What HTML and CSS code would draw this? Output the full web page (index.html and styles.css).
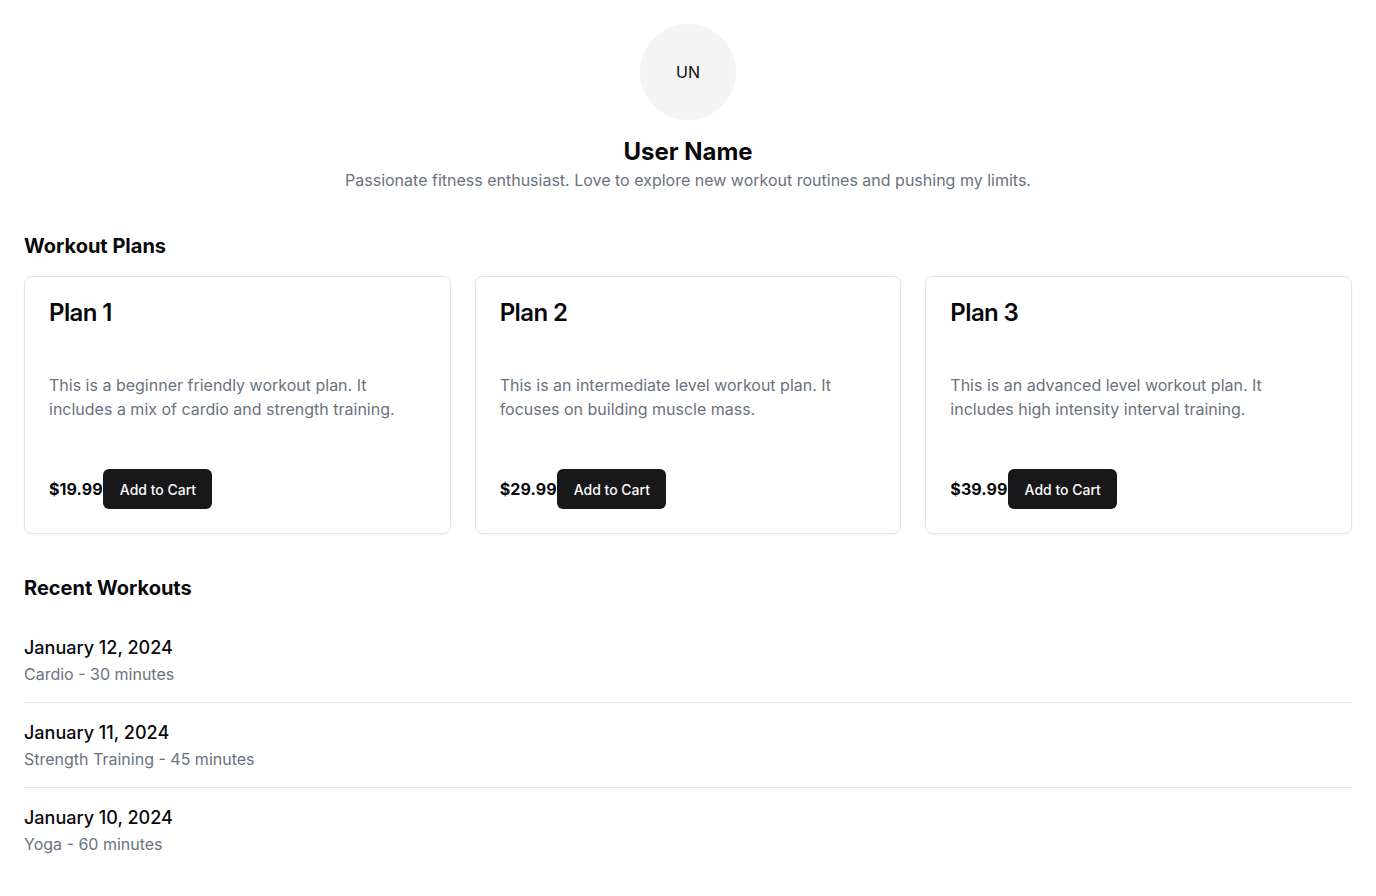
FILE: index.html
```html
<!DOCTYPE html>
<html lang="en">
<head>
<meta charset="utf-8">
<title>Profile</title>
<link rel="stylesheet" href="styles.css">
</head>
<body>
<main class="page">
  <section class="profile">
    <div class="avatar">UN</div>
    <h1 class="name">User Name</h1>
    <p class="bio">Passionate fitness enthusiast. Love to explore new workout routines and pushing my limits.</p>
  </section>

  <section class="plans">
    <h2 class="section-title">Workout Plans</h2>
    <div class="plan-grid">
      <div class="card">
        <div class="card-header">
          <h3 class="card-title">Plan 1</h3>
          <p class="card-desc"></p>
        </div>
        <div class="card-content">
          <p>This is a beginner friendly workout plan. It includes a mix of cardio and strength training.</p>
        </div>
        <div class="card-footer">
          <span class="price">$19.99</span>
          <button class="btn">Add to Cart</button>
        </div>
      </div>
      <div class="card">
        <div class="card-header">
          <h3 class="card-title">Plan 2</h3>
          <p class="card-desc"></p>
        </div>
        <div class="card-content">
          <p>This is an intermediate level workout plan. It focuses on building muscle mass.</p>
        </div>
        <div class="card-footer">
          <span class="price">$29.99</span>
          <button class="btn">Add to Cart</button>
        </div>
      </div>
      <div class="card">
        <div class="card-header">
          <h3 class="card-title">Plan 3</h3>
          <p class="card-desc"></p>
        </div>
        <div class="card-content">
          <p>This is an advanced level workout plan. It includes high intensity interval training.</p>
        </div>
        <div class="card-footer">
          <span class="price">$39.99</span>
          <button class="btn">Add to Cart</button>
        </div>
      </div>
    </div>
  </section>

  <section class="recent">
    <h2 class="section-title">Recent Workouts</h2>
    <ul class="workouts">
      <li class="workout">
        <div class="w-date">January 12, 2024</div>
        <div class="w-info">Cardio - 30 minutes</div>
      </li>
      <li class="workout">
        <div class="w-date">January 11, 2024</div>
        <div class="w-info">Strength Training - 45 minutes</div>
      </li>
      <li class="workout">
        <div class="w-date">January 10, 2024</div>
        <div class="w-info">Yoga - 60 minutes</div>
      </li>
    </ul>
  </section>
</main>
</body>
</html>
```

FILE: styles.css
```css
* { box-sizing: border-box; }
html, body { margin: 0; padding: 0; background: #fff; }
body {
  font-family: Inter, "Noto Sans", sans-serif;
  color: #09090b;
  font-size: 16px;
  line-height: 24px;
}
h1, h2, h3, p, ul { margin: 0; padding: 0; }

.page { padding: 24px; }

.profile {
  display: flex;
  flex-direction: column;
  align-items: center;
}
.avatar {
  width: 96px;
  height: 96px;
  border-radius: 50%;
  background: #f4f4f5;
  display: flex;
  align-items: center;
  justify-content: center;
  font-size: 16px;
  color: #09090b;
}
.name {
  margin-top: 16px;
  font-size: 24px;
  line-height: 32px;
  font-weight: 700;
}
.bio {
  color: #6b7280;
  font-size: 16px;
  line-height: 24px;
}

.plans { margin-top: 40px; }
.section-title {
  font-size: 20px;
  line-height: 28px;
  font-weight: 700;
  margin-bottom: 16px;
}
.plan-grid {
  display: grid;
  grid-template-columns: repeat(3, 1fr);
  gap: 24px;
}
.card {
  border: 1px solid #e4e4e7;
  border-radius: 8px;
  box-shadow: 0 1px 2px rgba(0,0,0,0.05);
  display: flex;
  flex-direction: column;
}
.card-header {
  padding: 24px 24px 22px;
  display: flex;
  flex-direction: column;
  gap: 6px;
}
.card-title {
  font-size: 24px;
  line-height: 24px;
  font-weight: 600;
  letter-spacing: -0.6px;
}
.card-desc {
  font-size: 14px;
  line-height: 20px;
  color: #71717a;
  min-height: 20px;
}
.card-content {
  padding: 0 24px 24px;
  color: #6b7280;
}
.card-content p { max-width: 360px; }
.card-footer {
  padding: 24px 24px 24px;
  display: flex;
  align-items: center;
}
.price {
  font-weight: 700;
  font-size: 16px;
  letter-spacing: 0.1px;
}
.btn {
  font-family: inherit;
  height: 40px;
  padding: 0 16px 0 17px;
  border: none;
  border-radius: 6px;
  background: #18181b;
  color: #fafafa;
  font-size: 14px;
  font-weight: 500;
}

.recent { margin-top: 40px; }
.workouts { list-style: none; }
.workout {
  padding: 16px 0 16px;
  border-bottom: 1px solid #e5e7eb;
}
.workout:last-child { border-bottom: none; }
.w-date {
  font-size: 18px;
  line-height: 28px;
  font-weight: 500;
}
.w-info {
  color: #6b7280;
  font-size: 16px;
  line-height: 24px;
}
```
